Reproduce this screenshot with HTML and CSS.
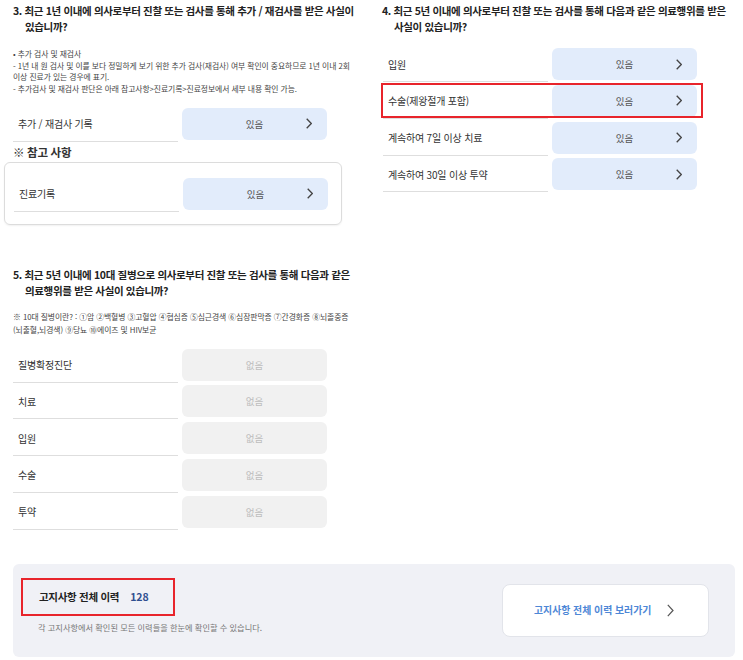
FILE: index.html
```html
<!DOCTYPE html>
<html lang="ko">
<head>
<meta charset="utf-8">
<title>고지사항</title>
<link rel="stylesheet" href="styles.css">
</head>
<body>
<div class="page">
  <div class="top">
    <section class="col col-left">
      <h3 class="q">3. 최근 1년 이내에 의사로부터 진찰 또는 검사를 통해 추가 / 재검사를 받은 사실이<br>있습니까?</h3>
      <div class="notes notes-3">• 추가 검사 및 재검사<br>- 1년 내 원 검사 및 이를 보다 정밀하게 보기 위한 추가 검사(재검사) 여부 확인이 중요하므로 1년 이내 2회<br>이상 진료가 있는 경우에 표기.<br>- 추가검사 및 재검사 판단은 아래 참고사항&gt;진료기록&gt;진료정보에서 세부 내용 확인 가능.</div>
      <div class="rows rows-3">
        <div class="row"><span class="label">추가 / 재검사 기록</span><span class="btn yes"><span class="val">있음</span><svg class="chev" viewBox="0 0 6 11"><polyline points="0.7,0.7 5.3,5.5 0.7,10.3"/></svg></span></div>
      </div>
      <div class="ref-title">※ 참고 사항</div>
      <div class="ref-box">
        <div class="row"><span class="label">진료기록</span><span class="btn yes"><span class="val">있음</span><svg class="chev" viewBox="0 0 6 11"><polyline points="0.7,0.7 5.3,5.5 0.7,10.3"/></svg></span></div>
      </div>

      <h3 class="q q5">5. 최근 5년 이내에 10대 질병으로 의사로부터 진찰 또는 검사를 통해 다음과 같은<br>의료행위를 받은 사실이 있습니까?</h3>
      <div class="notes notes-5">※ 10대 질병이란? : ①암 ②백혈병 ③고혈압 ④협심증 ⑤심근경색 ⑥심장판막증 ⑦간경화증 ⑧뇌졸중증<br>(뇌출혈,뇌경색) ⑨당뇨 ⑩에이즈 및 HIV보균</div>
      <div class="rows rows-5">
        <div class="row"><span class="label">질병확정진단</span><span class="btn no"><span class="val">없음</span></span></div>
        <div class="row"><span class="label">치료</span><span class="btn no"><span class="val">없음</span></span></div>
        <div class="row"><span class="label">입원</span><span class="btn no"><span class="val">없음</span></span></div>
        <div class="row"><span class="label">수술</span><span class="btn no"><span class="val">없음</span></span></div>
        <div class="row"><span class="label">투약</span><span class="btn no"><span class="val">없음</span></span></div>
      </div>
    </section>

    <section class="col col-right">
      <h3 class="q">4. 최근 5년 이내에 의사로부터 진찰 또는 검사를 통해 다음과 같은 의료행위를 받은<br>사실이 있습니까?</h3>
      <div class="rows rows-4">
        <div class="row"><span class="label">입원</span><span class="btn yes"><span class="val">있음</span><svg class="chev" viewBox="0 0 6 11"><polyline points="0.7,0.7 5.3,5.5 0.7,10.3"/></svg></span></div>
        <div class="row marked"><span class="label">수술(제왕절개 포함)</span><span class="btn yes"><span class="val">있음</span><svg class="chev" viewBox="0 0 6 11"><polyline points="0.7,0.7 5.3,5.5 0.7,10.3"/></svg></span><span class="mark"></span></div>
        <div class="row"><span class="label">계속하여 7일 이상 치료</span><span class="btn yes"><span class="val">있음</span><svg class="chev" viewBox="0 0 6 11"><polyline points="0.7,0.7 5.3,5.5 0.7,10.3"/></svg></span></div>
        <div class="row"><span class="label">계속하여 30일 이상 투약</span><span class="btn yes"><span class="val">있음</span><svg class="chev" viewBox="0 0 6 11"><polyline points="0.7,0.7 5.3,5.5 0.7,10.3"/></svg></span></div>
      </div>
    </section>
  </div>

  <div class="panel">
    <div class="panel-info">
      <div class="total"><span class="total-label">고지사항 전체 이력</span><span class="total-num">128</span></div>
      <p class="total-desc">각 고지사항에서 확인된 모든 이력들을 한눈에 확인할 수 있습니다.</p>
    </div>
    <a class="history-btn" href="#"><span>고지사항 전체 이력 보러가기</span><svg class="chev2" viewBox="0 0 7 13"><polyline points="0.8,0.8 6,6.5 0.8,12.2"/></svg></a>
  </div>
</div>
</body>
</html>
```

FILE: styles.css
```css
* { box-sizing: border-box; }
html, body { margin: 0; padding: 0; background: #fff; }
body {
  font-family: "Noto Sans CJK KR", "Noto Sans", sans-serif;
  color: #333;
  width: 743px;
  height: 660px;
  overflow: hidden;
}
.page { width: 743px; }

.top {
  display: grid;
  grid-template-columns: 370px 373px;
  align-items: start;
}
.col-left { padding-left: 13px; }
.col-right { padding-left: 12px; }

.q {
  margin: 0;
  padding-top: 3px;
  padding-left: 12px;
  text-indent: -12px;
  font-size: 10.5px;
  line-height: 16px;
  font-weight: 700;
  color: #222;
  letter-spacing: -0.35px;
  white-space: nowrap;
}
.q5 { margin-top: 42px; padding-top: 0; }

.notes {
  font-size: 7.8px;
  color: #444;
  white-space: nowrap;
  letter-spacing: -0.05px;
}
.notes-3 { margin-top: 13px; line-height: 11.5px; }
.notes-5 { margin-top: 12.5px; line-height: 12.5px; }

.rows { display: flex; flex-direction: column; gap: 2.75px; }
.rows-3 { margin-top: 13.75px; }
.rows-4 { margin-top: 13px; margin-left: 1px; }
.rows-5 { margin-top: 12.25px; }

.row {
  display: grid;
  grid-template-columns: 165px 145px;
  column-gap: 4px;
  width: 314px;
  height: 34px;
  position: relative;
}
.label {
  display: flex;
  align-items: center;
  padding: 0 0 1px 5px;
  border-bottom: 1px solid #dedede;
  font-size: 10px;
  letter-spacing: -0.2px;
  color: #333;
  white-space: nowrap;
}
.btn {
  height: 32px;
  border-radius: 6px;
  display: grid;
  grid-template-columns: 1fr auto 1fr;
  align-items: center;
  font-size: 9.5px;
}
.btn .val { grid-column: 2; }
.btn.yes { background: #e2ecfb; color: #555; }
.btn.no { background: #f1f1f1; color: #bdbdbd; }
.chev {
  grid-column: 3;
  justify-self: end;
  margin-right: 15px;
  width: 6px;
  height: 11px;
  fill: none;
  stroke: #444;
  stroke-width: 1.3;
}

.mark {
  position: absolute;
  top: -2px;
  bottom: 1px;
  left: -2px;
  right: -6px;
  border: 2px solid #e8242b;
  pointer-events: none;
}

.ref-title {
  margin-top: 2px;
  font-size: 11.5px;
  line-height: 16px;
  font-weight: 700;
  color: #333;
  letter-spacing: -0.3px;
}
.ref-box {
  margin: 2px 0 0 -9px;
  width: 338px;
  border: 1px solid #dcdcdc;
  border-radius: 6px;
  box-shadow: 0 1px 2px rgba(0,0,0,0.06);
  padding: 15px 0 12px 9px;
}

.panel {
  margin: 34px 0 0 13px;
  width: 722px;
  height: 93px;
  background: #f0f1f6;
  border-radius: 6px;
  display: flex;
  justify-content: space-between;
  align-items: flex-start;
  padding: 14px 26px 0 8px;
}
.total {
  width: 154px;
  height: 38px;
  border: 2px solid #e8242b;
  display: flex;
  align-items: center;
  padding-left: 16px;
}
.total-label {
  font-size: 10.5px;
  font-weight: 700;
  color: #222;
  letter-spacing: -0.3px;
}
.total-num {
  margin-left: 11px;
  font-size: 10.5px;
  font-weight: 700;
  color: #2f4e8f;
}
.total-desc {
  margin: 5px 0 0 17px;
  font-size: 8.2px;
  line-height: 12px;
  color: #777;
  white-space: nowrap;
}
.history-btn {
  margin-top: 6px;
  width: 207px;
  height: 53px;
  background: #fff;
  border: 1px solid #e2e4ea;
  border-radius: 8px;
  display: flex;
  align-items: center;
  padding-left: 31px;
  text-decoration: none;
  color: #4d87d6;
  font-size: 9.9px;
  font-weight: 700;
  white-space: nowrap;
}
.chev2 {
  margin-left: 16px;
  width: 7px;
  height: 13px;
  fill: none;
  stroke: #555;
  stroke-width: 1.2;
}
```
